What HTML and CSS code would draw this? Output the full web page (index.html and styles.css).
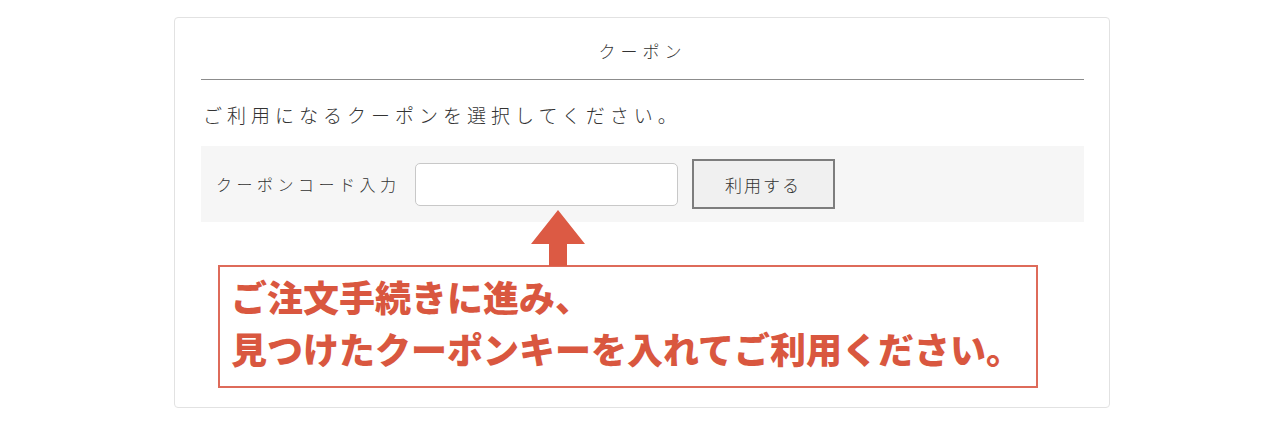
FILE: index.html
```html
<!DOCTYPE html>
<html lang="ja">

<head>
    <meta charset="UTF-8">
    <meta name="viewport" content="width=device-width, initial-scale=1.0">
    <title>クーポン</title>
    <link rel="stylesheet" href="styles.css">
</head>

<body>
    <div class="coupon-box">
        <h2 class="coupon-title">クーポン</h2>
        <p class="lead">ご利用になるクーポンを選択してください。</p>
        <div class="code-row">
            <label class="code-label" for="coupon-code">クーポンコード入力</label>
            <input type="text" id="coupon-code" class="code-input">
            <button class="use-btn" type="button">利用する</button>
        </div>
        <svg class="arrow" width="54" height="56" viewBox="0 0 54 56">
            <polygon points="27,0 54,34 36,34 36,56 18,56 18,34 0,34" fill="#dc5a44" />
        </svg>
        <div class="note">
            ご注文手続きに進み、<br>
            見つけたクーポンキーを入れてご利用ください。
        </div>
    </div>
</body>

</html>
```

FILE: styles.css
```css
* {
    box-sizing: border-box;
    margin: 0;
}

body {
    background-color: #fff;
    font-family: "Noto Sans CJK JP", "Noto Sans", sans-serif;
    color: #333;
    padding-top: 17px;
}

.coupon-box {
    width: 936px;
    margin-left: 174px;
    border: 1px solid #e2e2e2;
    border-radius: 4px;
    padding: 0 25px 19px 26px;
}

.coupon-title {
    font-size: 17px;
    font-weight: 300;
    letter-spacing: 5px;
    text-align: center;
    line-height: 57px;
    padding-top: 4px;
    border-bottom: 1px solid #8c8c8c;
}

.lead {
    font-size: 19px;
    font-weight: 300;
    letter-spacing: 5px;
    line-height: 30px;
    margin: 20px 0 16px 2px;
}

.code-row {
    display: flex;
    align-items: center;
    height: 76px;
    background-color: #f6f6f6;
    padding-left: 15px;
}

.code-label {
    font-size: 16px;
    font-weight: 300;
    letter-spacing: 4.5px;
    margin-right: 14px;
}

.code-input {
    width: 263px;
    height: 43px;
    border: 1px solid #c8c8c8;
    border-radius: 5px;
    background-color: #fff;
    margin-right: 14px;
}

.use-btn {
    width: 143px;
    height: 50px;
    border: 2px solid #7d7d7d;
    background-color: #f0f0f0;
    font-family: inherit;
    font-size: 17px;
    font-weight: 300;
    letter-spacing: 2px;
    color: #333;
}

.arrow {
    display: block;
    margin: -12px 0 0 330px;
}

.note {
    width: 820px;
    margin-left: 17px;
    margin-top: -1px;
    height: 123px;
    border: 2px solid #de6b5a;
    padding: 3px 0 0 11px;
    font-size: 36px;
    font-weight: 900;
    line-height: 52px;
    color: #d9573f;
}
```
